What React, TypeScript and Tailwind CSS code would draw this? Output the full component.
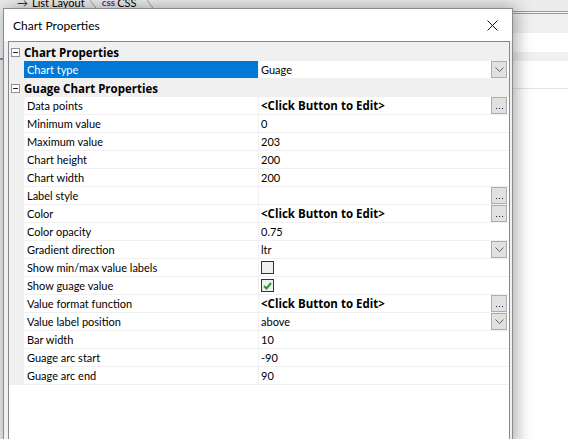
import React from "react";

type Row = {
  cat?: boolean;
  label: string;
  value?: string;
  bold?: boolean;
  btn?: "dots" | "drop";
  check?: boolean;
  selected?: boolean;
};

const rows: Row[] = [
  { cat: true, label: "Chart Properties" },
  { label: "Chart type", value: "Guage", selected: true, btn: "drop" },
  { cat: true, label: "Guage Chart Properties" },
  { label: "Data points", value: "<Click Button to Edit>", bold: true, btn: "dots" },
  { label: "Minimum value", value: "0" },
  { label: "Maximum value", value: "203" },
  { label: "Chart height", value: "200" },
  { label: "Chart width", value: "200" },
  { label: "Label style", value: "", btn: "dots" },
  { label: "Color", value: "<Click Button to Edit>", bold: true, btn: "dots" },
  { label: "Color opacity", value: "0.75" },
  { label: "Gradient direction", value: "ltr", btn: "drop" },
  { label: "Show min/max value labels", check: false },
  { label: "Show guage value", check: true },
  { label: "Value format function", value: "<Click Button to Edit>", bold: true, btn: "dots" },
  { label: "Value label position", value: "above", btn: "drop" },
  { label: "Bar width", value: "10" },
  { label: "Guage arc start", value: "-90" },
  { label: "Guage arc end", value: "90" },
];

const boldFont = { fontFamily: "'Open Sans', 'Noto Sans', sans-serif" };

function DotsBtn() {
  return (
    <div className="ml-auto mr-[2px] flex h-[17px] w-[16px] shrink-0 items-end justify-center border border-[#adadad] bg-[#e1e1e1] pb-[4px]">
      <div className="flex gap-[2px]">
        <div className="h-[1px] w-[1px] bg-[#1a1a50]" />
        <div className="h-[1px] w-[1px] bg-[#1a1a50]" />
        <div className="h-[1px] w-[1px] bg-[#1a1a50]" />
      </div>
    </div>
  );
}

function DropBtn() {
  return (
    <div className="ml-auto mr-[2px] flex h-[17px] w-[16px] shrink-0 items-center justify-center border border-[#adadad] bg-[#e1e1e1]">
      <svg width="9" height="5" viewBox="0 0 9 5">
        <path d="M0.5 0.5 L4.5 4.5 L8.5 0.5" fill="none" stroke="#606060" strokeWidth="1" />
      </svg>
    </div>
  );
}

function CheckBox({ checked }: { checked: boolean }) {
  return (
    <div className="flex h-[13px] w-[13px] items-center justify-center border border-[#333333] bg-[#f0f0f0]">
      {checked && (
        <svg width="9" height="8" viewBox="0 0 9 8">
          <path d="M1 4 L3.5 6.5 L8 1" fill="none" stroke="#2a9a2a" strokeWidth="2" />
        </svg>
      )}
    </div>
  );
}

function Expander() {
  return (
    <div className="ml-[2px] flex h-[9px] w-[9px] items-center justify-center border border-[#919191] bg-white">
      <div className="h-[1px] w-[5px] bg-[#222]" />
    </div>
  );
}

function GridRow({ r }: { r: Row }) {
  if (r.cat) {
    return (
      <div className="flex h-[18px] items-center bg-[#f0f0f0]">
        <div className="flex h-full w-[15px] items-center">
          <Expander />
        </div>
        <div className="text-[11.5px] font-bold text-black" style={boldFont}>
          {r.label}
        </div>
      </div>
    );
  }
  return (
    <div className="flex h-[18px]">
      <div className="h-full w-[15px] shrink-0 bg-[#f0f0f0]" />
      <div
        className={
          "flex h-full w-[234px] shrink-0 items-center border-b border-[#f0f0f0] bg-clip-padding pl-[3px] " +
          (r.selected ? "bg-[#0078d7] text-white" : "bg-white text-black")
        }
      >
        {r.label}
      </div>
      <div className="h-full w-[1px] shrink-0 bg-[#f0f0f0]" />
      <div className="flex h-full min-w-0 flex-1 items-start border-b border-[#f0f0f0] bg-white">
        <div className="flex h-[17px] flex-1 items-center pl-[2px]">
          {r.check !== undefined ? (
            <CheckBox checked={r.check} />
          ) : r.bold ? (
            <span className="text-[11.5px] font-bold text-black" style={boldFont}>
              {r.value}
            </span>
          ) : (
            <span className="text-black">{r.value}</span>
          )}
          {r.btn === "dots" && <DotsBtn />}
          {r.btn === "drop" && <DropBtn />}
        </div>
      </div>
    </div>
  );
}

export default function App() {
  return (
    <div
      className="relative h-[439px] w-[568px] overflow-hidden bg-white text-[11px] leading-[17px]"
      style={{ fontFamily: "Lato, 'Noto Sans', sans-serif" }}
    >
      {/* background application */}
      <div className="flex h-full">
        <div className="flex h-full w-[3px] flex-col bg-[#ebebeb]">
          <div className="h-[58px]" />
          <div className="h-[2px] w-[3px] bg-[#7a8db0]" />
        </div>
        <div className="flex h-full flex-1 flex-col">
          <div className="relative flex h-[11px] items-start overflow-hidden bg-[#ececec]">
            <div className="-mt-[6px] flex items-center gap-[4px] pl-[14px] text-[11px] text-black">
              <span className="text-[#333]">→</span>
              <span>List Layout</span>
            </div>
            <svg className="ml-[5px]" width="8" height="11" viewBox="0 0 8 11">
              <path d="M0 0 L8 11" stroke="#a0a0a0" strokeWidth="1" />
            </svg>
            <div className="-mt-[6px] ml-[4px] flex items-center gap-[2px] text-[11px]">
              <span className="text-[10px] font-bold text-[#6b2fa0]">css</span>
              <span className="text-black">CSS</span>
            </div>
            <svg className="ml-[10px]" width="8" height="11" viewBox="0 0 8 11">
              <path d="M0 0 L8 11" stroke="#a0a0a0" strokeWidth="1" />
            </svg>
          </div>
          <div className="h-[1px] bg-[#9a9a9a]" />
          <div className="h-[1px] bg-[#f4f4f4]" />
          <div className="h-[1px] bg-[#9a9a9a]" />
          <div className="h-[19px] bg-[#f0f0f0]" />
          <div className="h-[19px] bg-white" />
          <div className="h-[9px] bg-[#f0f0f0]" />
          <div className="h-[27px] bg-white" />
          <div className="h-[1px] bg-[#e3e3e3]" />
          <div className="flex-1 bg-white" />
        </div>
      </div>

      {/* dialog window */}
      <div className="absolute left-[3px] top-[8px] flex h-[440px] w-[510px] flex-col border border-[#8c8c8c] bg-[#f0f0f0] shadow-[3px_0_16px_rgba(0,0,0,0.35)]">
        <div className="flex h-[32px] shrink-0 items-center bg-white pl-[9px] pr-[9px]">
          <span className="text-[12px] text-black">Chart Properties</span>
          <svg className="ml-auto mr-[5px]" width="11" height="11" viewBox="0 0 11 11">
            <path d="M0.5 0.5 L10.5 10.5 M10.5 0.5 L0.5 10.5" stroke="#111" strokeWidth="1" />
          </svg>
        </div>
        <div className="ml-[4px] mr-[2px] flex flex-1 flex-col border border-[#828790] bg-white">
          <div className="h-[1px] bg-[#f0f0f0]" />
          {rows.map((r, i) => (
            <GridRow key={i} r={r} />
          ))}
        </div>
      </div>
    </div>
  );
}
